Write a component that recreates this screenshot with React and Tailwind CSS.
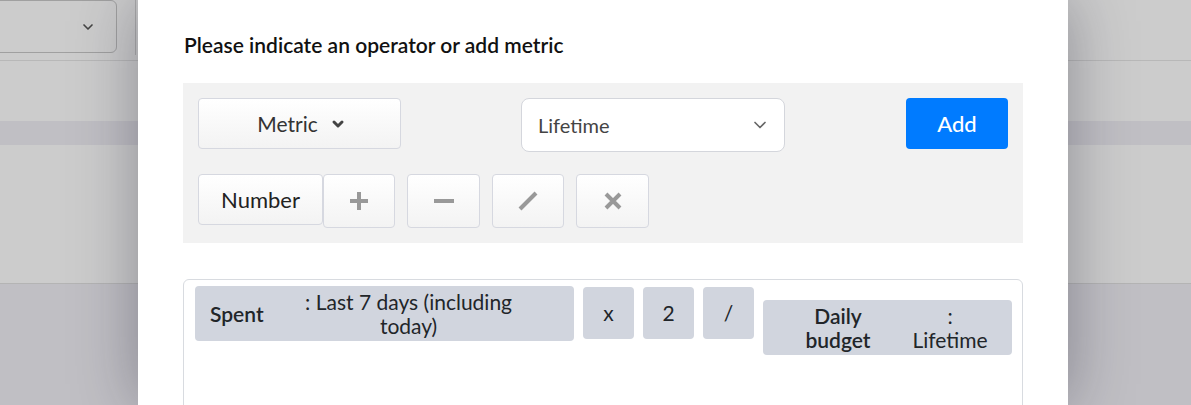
import React from 'react'

const font = { fontFamily: '"Source Sans Pro", Lato, "Liberation Sans", sans-serif' }

function ChevronDown({ className = '', strokeWidth = 2 }) {
  return (
    <svg viewBox="0 0 24 24" className={className} fill="none" stroke="currentColor" strokeWidth={strokeWidth} strokeLinecap="round" strokeLinejoin="round">
      <path d="M6 9l6 6 6-6" />
    </svg>
  )
}

function OpIcon({ kind }) {
  return (
    <svg viewBox="0 0 20 20" className="w-5 h-5 text-[#999]" stroke="currentColor" strokeWidth="4" fill="none">
      {kind === 'plus' && <path d="M10 1v18M1 10h18" />}
      {kind === 'minus' && <path d="M-1 10h22" />}
      {kind === 'divide' && <path d="M18 2L2 18" />}
      {kind === 'times' && <path d="M3 3l14 14M17 3L3 17" />}
    </svg>
  )
}

const btnBase = 'flex items-center justify-center border border-[#d6d8e0] rounded bg-gradient-to-b from-white to-[#f3f3f3]'

function Background() {
  return (
    <div className="absolute inset-0 flex flex-col">
      <div className="h-[61px] bg-white border-b border-[#e6e6e6] flex items-start shrink-0">
        <div className="w-[127px] h-[53px] -ml-[10px] border border-[#c8c8c8] rounded-md flex items-center justify-end pr-[20px] text-[#555]">
          <ChevronDown className="w-4 h-4" strokeWidth={2.5} />
        </div>
        <div className="ml-[18px] w-px h-[55px] bg-[#d8d8d8]" />
      </div>
      <div className="h-[60px] bg-white shrink-0" />
      <div className="h-[24px] bg-[#f0eff5] shrink-0" />
      <div className="h-[139px] bg-white border-b border-[#e2e2e2] shrink-0" />
      <div className="flex-1 bg-[#f0eff5]" />
    </div>
  )
}

function Chip({ children, className = '' }) {
  return (
    <div className={`bg-[#d1d5de] rounded text-[21px] leading-[24px] text-[#212529] flex items-center ${className}`}>
      {children}
    </div>
  )
}

export default function App() {
  return (
    <div className="relative w-[1191px] h-[405px] overflow-hidden" style={font}>
      <Background />
      <div className="absolute inset-0 bg-black/20 flex pl-[138px]">
        <div className="w-[930px] h-full bg-white shadow-[0_0_60px_rgba(20,20,40,0.35)] px-[45px] pt-[31px]">
          <h2 className="text-[21px] leading-[28px] font-semibold text-[#111] ml-px">Please indicate an operator or add metric</h2>

          <div className="mt-[24px] bg-[#f2f2f2] p-[15px]">
            <div className="flex items-start">
              <button className={`${btnBase} w-[203px] h-[51px] text-[21px] text-[#333] gap-[12px] pl-[4px]`}>
                Metric
                <ChevronDown className="w-[16px] h-[16px] text-[#444]" strokeWidth={4.5} />
              </button>
              <div className="ml-[120px] w-[264px] h-[54px] bg-white border border-[#d4d6dc] rounded-lg flex items-center justify-between pl-[16px] pr-[14px] text-[20px] text-[#444]">
                Lifetime
                <ChevronDown className="w-[20px] h-[20px] text-[#666]" strokeWidth={2} />
              </div>
              <button className="ml-auto w-[102px] h-[51px] bg-[#007bff] rounded text-white text-[22px] font-medium flex items-center justify-center">
                Add
              </button>
            </div>

            <div className="flex items-start mt-[22px]">
              <button className={`${btnBase} w-[125px] h-[51px] text-[22px] text-[#222]`}>Number</button>
              <button className={`${btnBase} w-[72px] h-[54px]`}><OpIcon kind="plus" /></button>
              <button className={`${btnBase} ml-[12px] w-[73px] h-[54px]`}><OpIcon kind="minus" /></button>
              <button className={`${btnBase} ml-[12px] w-[72px] h-[54px]`}><OpIcon kind="divide" /></button>
              <button className={`${btnBase} ml-[12px] w-[73px] h-[54px]`}><OpIcon kind="times" /></button>
            </div>
          </div>

          <div className="mt-[36px] border border-[#d8dbe0] rounded-md h-[200px] pl-[11px] pt-[6px] flex items-start gap-[9px]">
            <Chip className="w-[379px] h-[55px] pl-[15px]">
              <span className="font-semibold">Spent</span>
              <span className="w-[250px] ml-[20px] text-center">: Last 7 days (including today)</span>
            </Chip>
            <Chip className="w-[51px] h-[52px] mt-px justify-center">x</Chip>
            <Chip className="w-[51px] h-[52px] mt-px justify-center">2</Chip>
            <Chip className="w-[51px] h-[52px] mt-px justify-center">/</Chip>
            <Chip className="w-[249px] h-[55px] mt-[14px] pl-[22px]">
              <span className="font-semibold w-[106px] text-center">Daily budget</span>
              <span className="w-[78px] ml-[20px] text-center">: Lifetime</span>
            </Chip>
          </div>
        </div>
      </div>
    </div>
  )
}
